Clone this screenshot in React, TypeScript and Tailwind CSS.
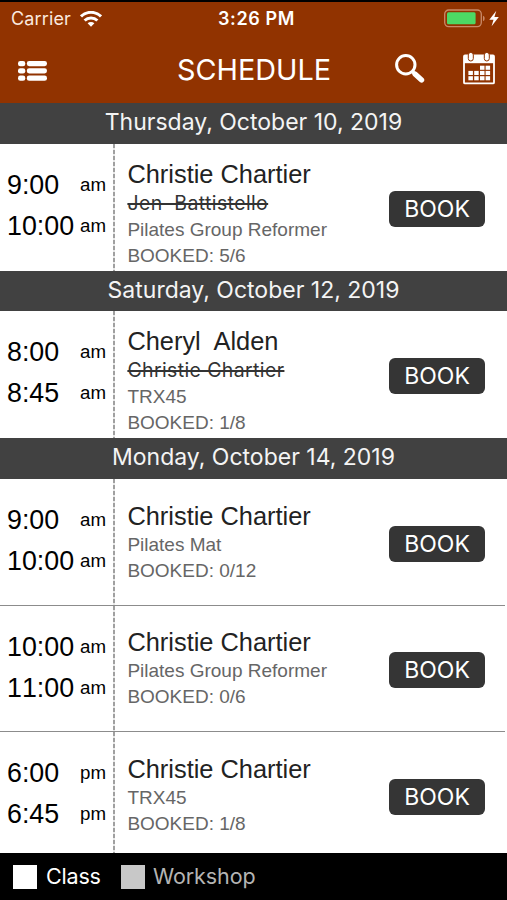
type Session = {
  start: string;
  startHalf: string;
  end: string;
  endHalf: string;
  teacher: string;
  replaced?: string;
  name: string;
  booked: string;
};

const days: { date: string; bar: string; sessions: Session[] }[] = [
  {
    date: "Thursday, October 10, 2019",
    bar: "h-[41px]",
    sessions: [
      { start: "9:00", startHalf: "am", end: "10:00", endHalf: "am", teacher: "Christie Chartier", replaced: "Jen  Battistello", name: "Pilates Group Reformer", booked: "5/6" },
    ],
  },
  {
    date: "Saturday, October 12, 2019",
    bar: "h-[40px]",
    sessions: [
      { start: "8:00", startHalf: "am", end: "8:45", endHalf: "am", teacher: "Cheryl  Alden", replaced: "Christie Chartier", name: "TRX45", booked: "1/8" },
    ],
  },
  {
    date: "Monday, October 14, 2019",
    bar: "h-[41px]",
    sessions: [
      { start: "9:00", startHalf: "am", end: "10:00", endHalf: "am", teacher: "Christie Chartier", name: "Pilates Mat", booked: "0/12" },
      { start: "10:00", startHalf: "am", end: "11:00", endHalf: "am", teacher: "Christie Chartier", name: "Pilates Group Reformer", booked: "0/6" },
      { start: "6:00", startHalf: "pm", end: "6:45", endHalf: "pm", teacher: "Christie Chartier", name: "TRX45", booked: "1/8" },
    ],
  },
];

function WifiIcon() {
  return (
    <svg className="h-[16px] w-[22px]" viewBox="0 0 22 16" fill="none" stroke="#fff" strokeWidth="3">
      <path d="M1 5.4a14.3 14.3 0 0 1 20 0" />
      <path d="M4.6 9.5a9.2 9.2 0 0 1 12.8 0" />
      <path d="M11 15.8l-3.4-3.5a4.9 4.9 0 0 1 6.8 0z" fill="#fff" stroke="none" />
    </svg>
  );
}

function BatteryIcon() {
  return (
    <svg className="h-[20px] w-[56px]" viewBox="0 0 56 20">
      <rect x="0.7" y="1" width="36.6" height="16.6" rx="4" fill="none" stroke="#c98a68" strokeWidth="1.3" />
      <rect x="3" y="3.3" width="28.6" height="12" rx="1.5" fill="#4cd964" />
      <path d="M39 6.7c2.2.6 2.2 4.8 0 5.4z" fill="#c98a68" />
      <path d="M52.3 1.7L45.3 10.7h4.2l-1.9 6.6 7.2-9.2h-4.4z" fill="#fff" />
    </svg>
  );
}

function ListIcon() {
  return (
    <svg className="mt-[3px] h-[20px] w-[29px]" viewBox="0 0 29 20" fill="#fff">
      {[0, 7.3, 14.6].map((y) => (
        <g key={y}>
          <rect x="0" y={y} width="7.3" height="5.2" rx="2.3" />
          <rect x="8.8" y={y} width="20.2" height="5.2" rx="2.4" />
        </g>
      ))}
    </svg>
  );
}

function SearchIcon() {
  return (
    <svg className="h-[30px] w-[30px]" viewBox="0 0 30 30" fill="none" stroke="#fff">
      <circle cx="10.8" cy="10.8" r="9.2" strokeWidth="3" />
      <path d="M17.2 17.2l3 3" strokeWidth="3.4" />
      <path d="M20 20l6.6 6" strokeWidth="5.2" strokeLinecap="round" />
    </svg>
  );
}

function CalendarIcon() {
  const cells = [
    [17, 13.7], [22.6, 13.7],
    [5.4, 18.9], [11.2, 18.9], [17, 18.9], [22.6, 18.9],
    [5.4, 24.2], [11.2, 24.2], [17, 24.2], [22.6, 24.2],
  ];
  return (
    <svg className="-mt-[2px] h-[33px] w-[32px]" viewBox="0 0 32 33">
      <rect x="1" y="3.4" width="30" height="28" rx="1" fill="none" stroke="#fff" strokeWidth="1.8" />
      <rect x="1" y="3.4" width="30" height="7.8" fill="#fff" />
      <rect x="5.3" y="0.4" width="5" height="8.6" rx="2.5" fill="#fff" stroke="#913300" strokeWidth="1" />
      <rect x="21.3" y="0.4" width="5" height="8.6" rx="2.5" fill="#fff" stroke="#913300" strokeWidth="1" />
      {cells.map(([x, y]) => (
        <rect key={`${x}-${y}`} x={x} y={y} width="4.5" height="4.1" fill="#fff" />
      ))}
    </svg>
  );
}

function TimeLine({ time, half }: { time: string; half: string }) {
  return (
    <div className="flex h-[41px] text-black">
      <span className="w-[73px] text-[26.8px] leading-[41px] [font-kerning:none]">{time}</span>
      <span className="text-[18.7px] leading-[40px]">{half}</span>
    </div>
  );
}

function SessionRow({ s, height, line }: { s: Session; height: string; line: boolean }) {
  return (
    <div className="bg-white pr-[2px]">
      <div className={`flex ${height} ${line ? "border-b border-[#8c8c8c]" : ""}`}>
        <div className="w-[113px] pt-[21px] pl-[7px]">
          <TimeLine time={s.start} half={s.startHalf} />
          <TimeLine time={s.end} half={s.endHalf} />
        </div>
        <div className="w-[2px] bg-[repeating-linear-gradient(to_bottom,#a0a0a0_0px,#a0a0a0_4px,#e8e8e8_4px,#e8e8e8_6px)]" />
        <div className={`flex-1 pl-[12.4px] whitespace-pre ${s.replaced ? "pt-[15px]" : "pt-[21.5px]"}`}>
          <div className="text-[25.4px] leading-[31px] text-[#222]">{s.teacher}</div>
          {s.replaced && (
            <div className="-ml-[2px] h-[27px] font-['Inter',sans-serif] text-[19.5px] leading-[26px] tracking-[0.38px] text-[#333]">
              <span className="pl-[2px] line-through decoration-[1.5px]">{s.replaced}</span>
            </div>
          )}
          <div className="text-[19px] leading-[26px] text-[#666]">{s.name}</div>
          <div className="text-[19px] leading-[25px] text-[#666]">BOOKED: {s.booked}</div>
        </div>
        <button className="mt-[46.5px] mr-[20px] h-[36px] w-[96px] rounded-[6px] bg-[#353535] font-['Inter',sans-serif] text-[23px] leading-[36px] text-white">
          BOOK
        </button>
      </div>
    </div>
  );
}

export default function App() {
  return (
    <div className="flex h-[900px] w-[507px] flex-col overflow-hidden bg-black font-['Liberation_Sans',Arial,sans-serif]">
      <header className="mt-[2px] h-[101px] bg-[#913300] font-['Inter',sans-serif] text-white">
        <div className="grid h-[33px] grid-cols-3 items-center">
          <div className="flex items-center gap-[9px] pl-[11px]">
            <span className="text-[18px] tracking-[0.15px] text-[#fbe9df]">Carrier</span>
            <WifiIcon />
          </div>
          <div className="pl-[6px] text-center text-[18px] font-semibold tracking-[0.6px]">3:26 PM</div>
          <div className="flex justify-end pr-[7px]">
            <BatteryIcon />
          </div>
        </div>
        <div className="flex h-[68px] items-center pr-[12px] pl-[18px]">
          <ListIcon />
          <h1 className="mt-[2px] ml-[130px] w-[154px] text-[28.8px] font-normal">SCHEDULE</h1>
          <div className="ml-auto flex items-center gap-[38px]">
            <SearchIcon />
            <CalendarIcon />
          </div>
        </div>
      </header>
      <main className="flex-1">
        {days.map((d, di) => (
          <section key={d.date}>
            <h2 className={`${d.bar} bg-[#414141] text-center font-['Inter',sans-serif] text-[23px] leading-[38px] font-normal text-[#f4f4f4]`}>
              {d.date}
            </h2>
            {d.sessions.map((s, i) => (
              <SessionRow
                key={s.start}
                s={s}
                line={di === 2 && i < 2}
                height={i === 2 ? "h-[121px]" : di === 2 ? "h-[126.5px]" : "h-[127px]"}
              />
            ))}
          </section>
        ))}
      </main>
      <footer className="flex h-[47px] items-center bg-black pl-[13px] font-['Inter',sans-serif] text-[21.5px]">
        <span className="h-[24px] w-[24px] bg-white" />
        <span className="ml-[9px] w-[75px] tracking-[-0.2px] text-white">Class</span>
        <span className="h-[24px] w-[24px] bg-[#c8c8c8]" />
        <span className="ml-[8px] tracking-[-0.1px] text-[#b4b4b4]">Workshop</span>
      </footer>
    </div>
  );
}
